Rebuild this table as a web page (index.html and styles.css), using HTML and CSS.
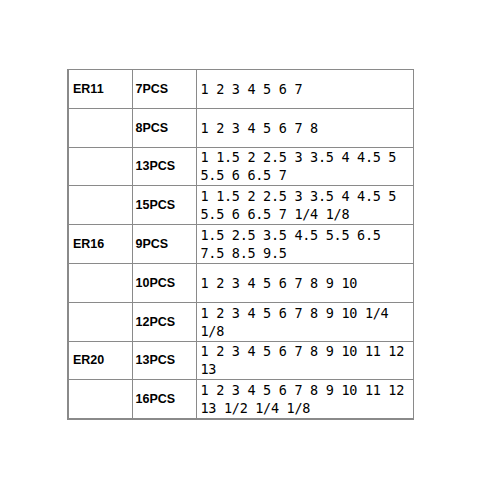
FILE: index.html
```html
<!DOCTYPE html>
<html>
<head>
<meta charset="utf-8">
<link rel="stylesheet" href="styles.css">
</head>
<body>
<table class="spec">
  <colgroup><col class="c-model"><col class="c-pcs"><col class="c-sizes"></colgroup>
  <tr><td class="model">ER11</td><td class="pcs">7PCS</td><td class="sizes">1 2 3 4 5 6 7</td></tr>
  <tr><td class="model"></td><td class="pcs">8PCS</td><td class="sizes">1 2 3 4 5 6 7 8</td></tr>
  <tr><td class="model"></td><td class="pcs">13PCS</td><td class="sizes">1 1.5 2 2.5 3 3.5 4 4.5 5<br>5.5 6 6.5 7</td></tr>
  <tr><td class="model"></td><td class="pcs">15PCS</td><td class="sizes">1 1.5 2 2.5 3 3.5 4 4.5 5<br>5.5 6 6.5 7 1/4 1/8</td></tr>
  <tr><td class="model">ER16</td><td class="pcs">9PCS</td><td class="sizes">1.5 2.5 3.5 4.5 5.5 6.5<br>7.5 8.5 9.5</td></tr>
  <tr><td class="model"></td><td class="pcs">10PCS</td><td class="sizes">1 2 3 4 5 6 7 8 9 10</td></tr>
  <tr><td class="model"></td><td class="pcs">12PCS</td><td class="sizes">1 2 3 4 5 6 7 8 9 10 1/4<br>1/8</td></tr>
  <tr><td class="model">ER20</td><td class="pcs">13PCS</td><td class="sizes">1 2 3 4 5 6 7 8 9 10 11 12<br>13</td></tr>
  <tr><td class="model"></td><td class="pcs">16PCS</td><td class="sizes">1 2 3 4 5 6 7 8 9 10 11 12<br>13 1/2 1/4 1/8</td></tr>
</table>
</body>
</html>
```
FILE: styles.css
```css
html, body {
  margin: 0;
  padding: 0;
  background: #ffffff;
}
body {
  padding: 69px 0 0 67px;
  color: #000000;
}
.spec {
  border-collapse: collapse;
  table-layout: fixed;
  width: 345px;
  border-left: 2px solid #8a8a8a;
  border-bottom: 2px solid #8a8a8a;
}
.c-model { width: 64px; }
.c-pcs { width: 64px; }
.c-sizes { width: 217px; }
.spec tr {
  height: 38.8px;
}
.spec td {
  box-sizing: border-box;
  border: 1px solid #8a8a8a;
  padding: 0 0 0 4px;
  vertical-align: middle;
  white-space: nowrap;
  overflow: hidden;
}
.model {
  font-family: "Liberation Sans", Arial, sans-serif;
  font-weight: bold;
  font-size: 12.5px;
}
.pcs {
  font-family: "Liberation Sans", Arial, sans-serif;
  font-weight: bold;
  font-size: 12.5px;
  padding-left: 3px !important;
}
.sizes {
  font-family: "DejaVu Sans Mono", monospace;
  font-size: 13.5px;
  letter-spacing: -0.3px;
  line-height: 18px;
}
```
